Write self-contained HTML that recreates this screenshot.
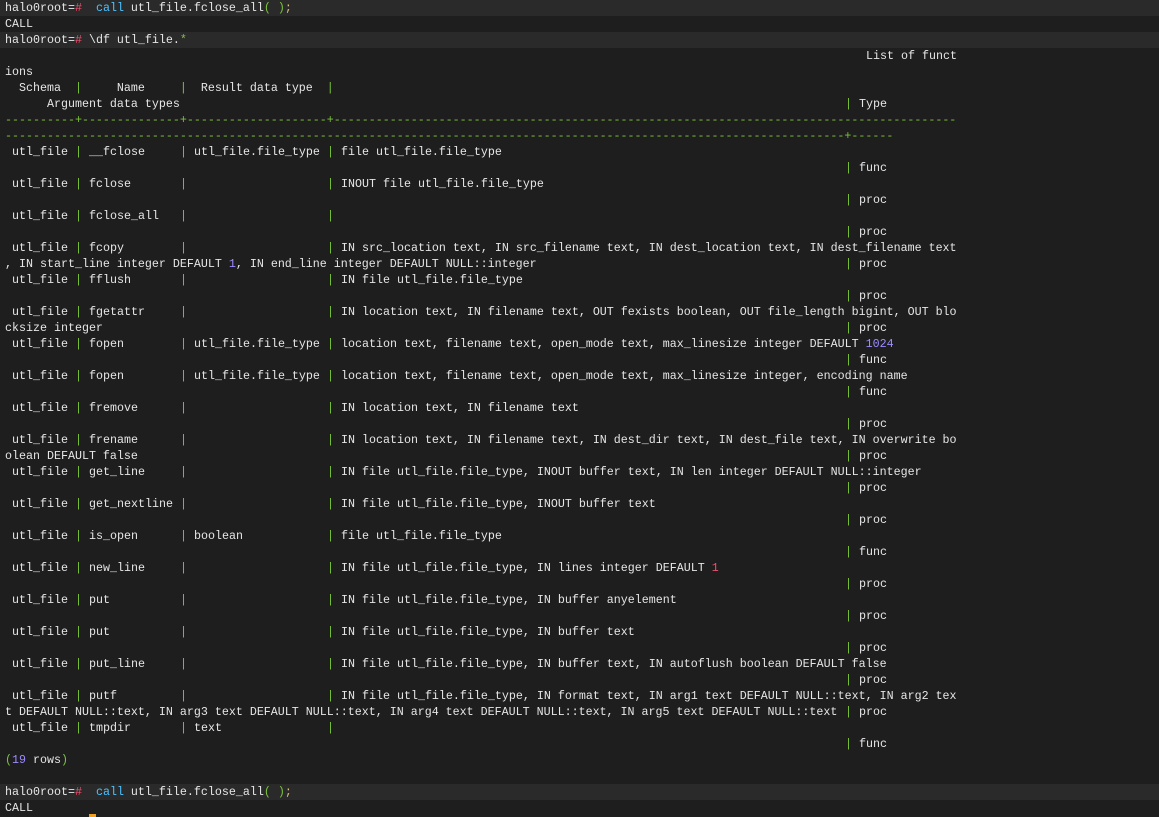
<!DOCTYPE html>
<html><head><meta charset="utf-8"><style>
html,body{margin:0;padding:0;background:#1e1e1e;width:1159px;height:817px;overflow:hidden}
body{font-family:"Liberation Mono","DejaVu Sans Mono",monospace;font-size:11.667px;color:#e6e6e6}
.l{position:relative;height:16px;line-height:16px;white-space:pre;padding-left:5px}
.h{background:#2a2a2a}
.l i{font-style:normal;position:absolute;top:0}
.g{color:#7cc33a}
.r{color:#f0506e}
.c{color:#4fc1ff}
.y{color:#e5c07b}
.n{color:#9c8cff}
.a{left:75px}.b{left:180px}.d{left:327px}.e{left:845px}
.k{left:89px}.m{left:194px}.o{left:341px}.t{left:859px}
.cur{position:absolute;left:89px;top:814px;width:7px;height:3px;background:#f0a020}
</style></head><body>
<div class="l h">halo0root=<span class="r">#</span>  <span class="c">call</span> utl_file.fclose_all<span class="g">(</span> <span class="g">)</span><span class="y">;</span></div>
<div class="l">CALL</div>
<div class="l h">halo0root=<span class="r">#</span> \df utl_file.<span class="g">*</span></div>
<div class="l"><i style="left:866px">List of funct</i></div>
<div class="l">ions</div>
<div class="l">  Schema  <span class="g">|</span>     Name     <span class="g">|</span>  Result data type  <span class="g">|</span></div>
<div class="l">      Argument data types<i class="e g">|</i><i class="t">Type</i></div>
<div class="l g">----------+--------------+--------------------+-----------------------------------------------------------------------------------------</div>
<div class="l g">------------------------------------------------------------------------------------------------------------------------+------</div>

<div class="l"> utl_file<i class="a g">|</i><i class="k">__fclose</i><i class="b g">|</i><i class="m">utl_file.file_type</i><i class="d g">|</i><i class="o">file utl_file.file_type</i></div>
<div class="l"><i class="e g">|</i><i class="t">func</i></div>
<div class="l"> utl_file<i class="a g">|</i><i class="k">fclose</i><i class="b g">|</i><i class="d g">|</i><i class="o">INOUT file utl_file.file_type</i></div>
<div class="l"><i class="e g">|</i><i class="t">proc</i></div>
<div class="l"> utl_file<i class="a g">|</i><i class="k">fclose_all</i><i class="b g">|</i><i class="d g">|</i></div>
<div class="l"><i class="e g">|</i><i class="t">proc</i></div>
<div class="l"> utl_file<i class="a g">|</i><i class="k">fcopy</i><i class="b g">|</i><i class="d g">|</i><i class="o">IN src_location text, IN src_filename text, IN dest_location text, IN dest_filename text</i></div>
<div class="l">, IN start_line integer DEFAULT <span class="n">1</span>, IN end_line integer DEFAULT NULL::integer<i class="e g">|</i><i class="t">proc</i></div>
<div class="l"> utl_file<i class="a g">|</i><i class="k">fflush</i><i class="b g">|</i><i class="d g">|</i><i class="o">IN file utl_file.file_type</i></div>
<div class="l"><i class="e g">|</i><i class="t">proc</i></div>
<div class="l"> utl_file<i class="a g">|</i><i class="k">fgetattr</i><i class="b g">|</i><i class="d g">|</i><i class="o">IN location text, IN filename text, OUT fexists boolean, OUT file_length bigint, OUT blo</i></div>
<div class="l">cksize integer<i class="e g">|</i><i class="t">proc</i></div>
<div class="l"> utl_file<i class="a g">|</i><i class="k">fopen</i><i class="b g">|</i><i class="m">utl_file.file_type</i><i class="d g">|</i><i class="o">location text, filename text, open_mode text, max_linesize integer DEFAULT <span class="n">1024</span></i></div>
<div class="l"><i class="e g">|</i><i class="t">func</i></div>
<div class="l"> utl_file<i class="a g">|</i><i class="k">fopen</i><i class="b g">|</i><i class="m">utl_file.file_type</i><i class="d g">|</i><i class="o">location text, filename text, open_mode text, max_linesize integer, encoding name</i></div>
<div class="l"><i class="e g">|</i><i class="t">func</i></div>
<div class="l"> utl_file<i class="a g">|</i><i class="k">fremove</i><i class="b g">|</i><i class="d g">|</i><i class="o">IN location text, IN filename text</i></div>
<div class="l"><i class="e g">|</i><i class="t">proc</i></div>
<div class="l"> utl_file<i class="a g">|</i><i class="k">frename</i><i class="b g">|</i><i class="d g">|</i><i class="o">IN location text, IN filename text, IN dest_dir text, IN dest_file text, IN overwrite bo</i></div>
<div class="l">olean DEFAULT false<i class="e g">|</i><i class="t">proc</i></div>
<div class="l"> utl_file<i class="a g">|</i><i class="k">get_line</i><i class="b g">|</i><i class="d g">|</i><i class="o">IN file utl_file.file_type, INOUT buffer text, IN len integer DEFAULT NULL::integer</i></div>
<div class="l"><i class="e g">|</i><i class="t">proc</i></div>
<div class="l"> utl_file<i class="a g">|</i><i class="k">get_nextline</i><i class="b g">|</i><i class="d g">|</i><i class="o">IN file utl_file.file_type, INOUT buffer text</i></div>
<div class="l"><i class="e g">|</i><i class="t">proc</i></div>
<div class="l"> utl_file<i class="a g">|</i><i class="k">is_open</i><i class="b g">|</i><i class="m">boolean</i><i class="d g">|</i><i class="o">file utl_file.file_type</i></div>
<div class="l"><i class="e g">|</i><i class="t">func</i></div>
<div class="l"> utl_file<i class="a g">|</i><i class="k">new_line</i><i class="b g">|</i><i class="d g">|</i><i class="o">IN file utl_file.file_type, IN lines integer DEFAULT <span class="r">1</span></i></div>
<div class="l"><i class="e g">|</i><i class="t">proc</i></div>
<div class="l"> utl_file<i class="a g">|</i><i class="k">put</i><i class="b g">|</i><i class="d g">|</i><i class="o">IN file utl_file.file_type, IN buffer anyelement</i></div>
<div class="l"><i class="e g">|</i><i class="t">proc</i></div>
<div class="l"> utl_file<i class="a g">|</i><i class="k">put</i><i class="b g">|</i><i class="d g">|</i><i class="o">IN file utl_file.file_type, IN buffer text</i></div>
<div class="l"><i class="e g">|</i><i class="t">proc</i></div>
<div class="l"> utl_file<i class="a g">|</i><i class="k">put_line</i><i class="b g">|</i><i class="d g">|</i><i class="o">IN file utl_file.file_type, IN buffer text, IN autoflush boolean DEFAULT false</i></div>
<div class="l"><i class="e g">|</i><i class="t">proc</i></div>
<div class="l"> utl_file<i class="a g">|</i><i class="k">putf</i><i class="b g">|</i><i class="d g">|</i><i class="o">IN file utl_file.file_type, IN format text, IN arg1 text DEFAULT NULL::text, IN arg2 tex</i></div>
<div class="l">t DEFAULT NULL::text, IN arg3 text DEFAULT NULL::text, IN arg4 text DEFAULT NULL::text, IN arg5 text DEFAULT NULL::text<i class="e g">|</i><i class="t">proc</i></div>
<div class="l"> utl_file<i class="a g">|</i><i class="k">tmpdir</i><i class="b g">|</i><i class="m">text</i><i class="d g">|</i></div>
<div class="l"><i class="e g">|</i><i class="t">func</i></div>
<div class="l"><span class="g">(</span><span class="n">19</span> rows<span class="g">)</span></div>
<div class="l"></div>
<div class="l h">halo0root=<span class="r">#</span>  <span class="c">call</span> utl_file.fclose_all<span class="g">(</span> <span class="g">)</span><span class="y">;</span></div>
<div class="l">CALL</div>
<div class="cur"></div>
</body></html>
